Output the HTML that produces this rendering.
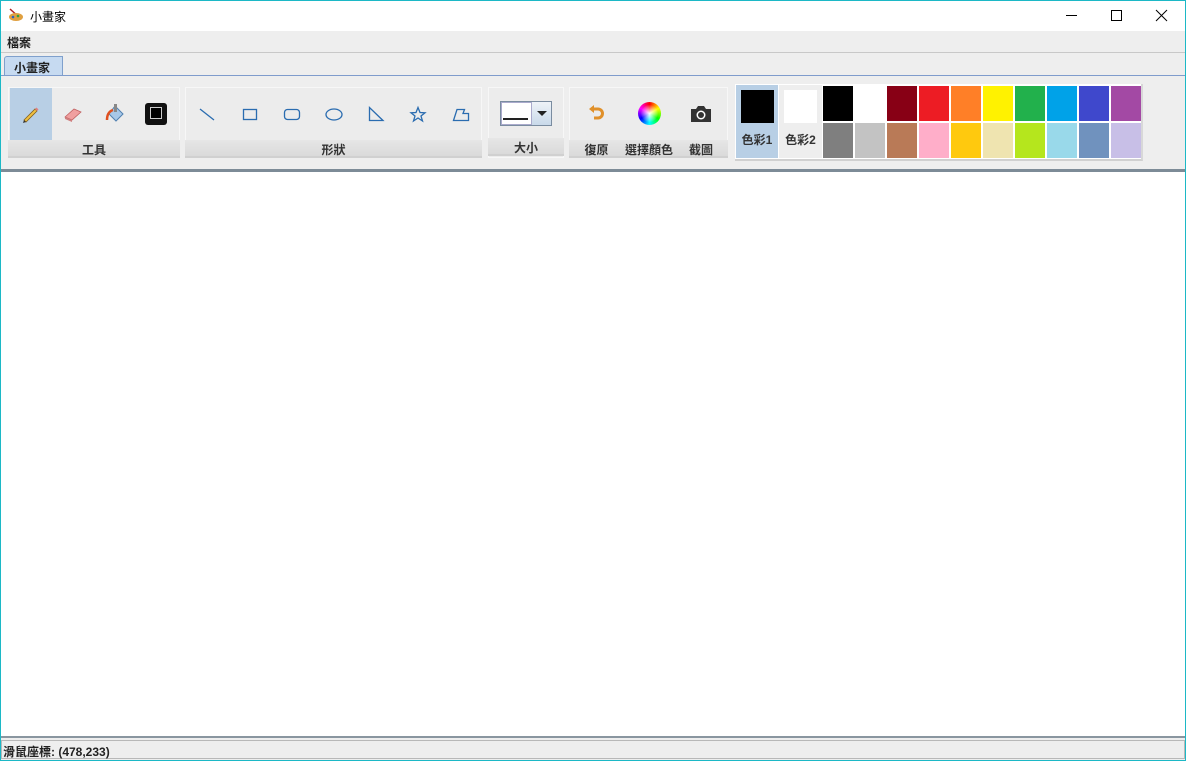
<!DOCTYPE html>
<html><head><meta charset="utf-8"><style>
*{margin:0;padding:0;box-sizing:border-box}
body{width:1186px;height:761px;position:relative;overflow:hidden;background:#eeeeee;font-family:"Liberation Sans","Noto Sans CJK TC",sans-serif;color:#222}
.a{position:absolute}
.lbl{position:absolute;font-size:12px;font-weight:bold;text-align:center;color:#333}
.grp{position:absolute;background:#ececec;border:1px solid #f7f7f7}
.band{position:absolute;background:linear-gradient(#e6e6e6,#dadada);border-bottom:2px solid #d0d0d0}
.sw{position:absolute;width:30px;height:35px}
</style></head><body>
<div class="a" style="left:0;top:0;width:1186px;height:761px;border:1px solid #1cb8c6;pointer-events:none;z-index:9"></div>
<div class="a" style="left:0;top:0;width:1186px;height:31px;background:#fff"></div>
<svg class="a" style="left:8px;top:8px" width="16" height="14"><path d="M2 1 L12 10" stroke="#b02020" stroke-width="1.5"/><ellipse cx="8" cy="9" rx="7" ry="4" fill="#e0a040"/><circle cx="5" cy="9" r="1.3" fill="#3060c0"/><circle cx="10" cy="8" r="1.3" fill="#30a040"/></svg>
<div class="a" style="left:30px;top:8px;font-size:12px;color:#000">小畫家</div>
<svg class="a" style="left:1060px;top:8px" width="110" height="16"><path d="M6 7.5H17" stroke="#000"/><rect x="51.5" y="2.5" width="10" height="10" fill="none" stroke="#000"/><path d="M96 2L107 13M107 2L96 13" stroke="#000"/></svg>
<div class="a" style="left:0;top:31px;width:1186px;height:22px;background:#eeeeee;border-bottom:1px solid #c8c8c8"></div>
<div class="a" style="left:7px;top:34px;font-size:12px;font-weight:bold">檔案</div>
<div class="a" style="left:4px;top:56px;width:59px;height:20px;background:#c6daf1;border:1px solid #7fa0cc;border-bottom:none;border-radius:3px 0 0 0"></div>
<div class="a" style="left:14px;top:59px;font-size:12px;font-weight:bold">小畫家</div>
<div class="a" style="left:1px;top:75px;width:1184px;height:1px;background:#7f9ccc"></div>
<div class="a" style="left:1px;top:169px;width:1184px;height:3px;background:#7d8b97"></div>
<div class="a" style="left:1px;top:172px;width:1184px;height:566px;background:#fff;border-bottom:2px solid #8a96a0"></div>
<div class="a" style="left:1px;top:740px;width:1184px;height:19px;background:#eeeeee;border:1px solid #b8b8b8"></div>
<div class="a" style="left:3px;top:743px;font-size:12px;font-weight:bold;color:#222">滑鼠座標: (478,233)</div>

<!-- 工具 -->
<div class="grp" style="left:8px;top:87px;width:172px;height:71px"></div>
<div class="a" style="left:10px;top:88px;width:42px;height:52px;background:#b8cfe5"></div>
<div class="band" style="left:8px;top:140px;width:172px;height:18px"></div>
<div class="lbl" style="left:8px;top:141px;width:172px">工具</div>
<svg class="a" style="left:20px;top:104px" width="22" height="20"><path d="M4 16 L15 5 L17 7 L6 18 Z" fill="#f0c040" stroke="#806020" stroke-width=".8"/><path d="M15 5L16.5 3.5L18.5 5.5L17 7Z" fill="#e08080"/><path d="M4 16L3 19L6 18Z" fill="#333"/></svg>
<svg class="a" style="left:62px;top:104px" width="22" height="20"><path d="M3 13 L12 5 L19 8 L10 16 Z" fill="#f0a0a0" stroke="#c06060" stroke-width=".8"/><path d="M3 13L10 16L10 18L3 15Z" fill="#d08080"/></svg>
<svg class="a" style="left:104px;top:102px" width="22" height="22"><path d="M11 4 L19 12 L12 19 L5 12 Z" fill="#a8c8e8" stroke="#5080b0"/><path d="M3 18 Q3 10 9 8" stroke="#e05020" stroke-width="2.5" fill="none"/><rect x="10" y="2" width="3" height="8" fill="#888"/></svg>
<div class="a" style="left:145px;top:103px;width:22px;height:22px;background:#111;border-radius:3px"></div>
<div class="a" style="left:150px;top:107px;width:12px;height:12px;border:1.5px solid #ccc;background:#000"></div>

<!-- 形狀 -->
<div class="grp" style="left:185px;top:87px;width:297px;height:71px"></div>
<div class="band" style="left:185px;top:140px;width:297px;height:18px"></div>
<div class="lbl" style="left:185px;top:141px;width:297px">形狀</div>
<svg class="a" style="left:185px;top:100px" width="297" height="30" fill="none" stroke="#2a6cb0" stroke-width="1.3">
<path d="M15 9L29 20"/><rect x="58.5" y="9.5" width="13" height="10"/><rect x="99.5" y="9.5" width="15" height="10" rx="3"/><ellipse cx="149" cy="14.5" rx="8" ry="5.5"/><path d="M184.5 7.5V20.5H198Z"/><path d="M233 7.5L235 12.5L240 12.8L236 16L237.5 21L233 18L228.5 21L230 16L226 12.8L231 12.5Z"/><path d="M268.5 20.5L272 9.5H279.5L278 13.5H283.5V20.5Z"/></svg>

<!-- 大小 -->
<div class="grp" style="left:488px;top:87px;width:76px;height:71px"></div>
<div class="band" style="left:488px;top:138px;width:76px;height:18px"></div>
<div class="lbl" style="left:488px;top:139px;width:76px">大小</div>
<div class="a" style="left:500px;top:101px;width:52px;height:25px;border:1px solid #7a8ca0;background:#fff"></div>
<div class="a" style="left:501px;top:102px;width:31px;height:23px;border:1px solid #aac;background:#fff"></div>
<div class="a" style="left:503px;top:118px;width:25px;height:2px;background:#222"></div>
<div class="a" style="left:532px;top:102px;width:19px;height:23px;background:linear-gradient(#eef3f8,#c9d9ea)"></div>
<div class="a" style="left:537px;top:111px;border-left:5px solid transparent;border-right:5px solid transparent;border-top:5px solid #222"></div>

<!-- 復原 -->
<div class="grp" style="left:569px;top:87px;width:159px;height:71px"></div>
<div class="band" style="left:569px;top:140px;width:159px;height:18px"></div>
<div class="lbl" style="left:569px;top:141px;width:55px">復原</div>
<div class="lbl" style="left:620px;top:141px;width:58px">選擇顏色</div>
<div class="lbl" style="left:680px;top:141px;width:42px">截圖</div>
<svg class="a" style="left:587px;top:104px" width="20" height="18"><path d="M5 5 H11 A4.5 4.5 0 0 1 11 14 H7" stroke="#e0902a" stroke-width="3" fill="none"/><path d="M2 5L7 1V9Z" fill="#e0902a"/></svg>
<div class="a" style="left:638px;top:102px;width:23px;height:23px;border-radius:50%;background:conic-gradient(red,#ff0,#0f0,#0ff,#00f,#f0f,red)"></div>
<div class="a" style="left:641px;top:105px;width:17px;height:17px;border-radius:50%;background:radial-gradient(#fff,rgba(255,255,255,0) 75%)"></div>
<svg class="a" style="left:689px;top:104px" width="24" height="20"><path d="M2 5H7L9 2H15L17 5H22V18H2Z" fill="#333" rx="2"/><circle cx="12" cy="11" r="4.5" fill="#fff"/><circle cx="12" cy="11" r="3" fill="#333"/></svg>

<!-- colors -->
<div class="a" style="left:735px;top:84px;width:408px;height:77px;background:#fff;border-right:2px solid #d8d8d8;border-bottom:2px solid #d0d0d0"></div>
<div class="a" style="left:736px;top:85px;width:42px;height:73px;background:#b8cfe5"></div>
<div class="a" style="left:741px;top:90px;width:33px;height:33px;background:#000"></div>
<div class="a" style="left:784px;top:90px;width:33px;height:33px;background:#fff"></div>
<div class="a" style="left:779px;top:85px;width:43px;height:73px;background:#eeeeee;z-index:0"></div>
<div class="a" style="left:784px;top:90px;width:33px;height:33px;background:#fff"></div>
<div class="lbl" style="left:736px;top:131px;width:42px">色彩1</div>
<div class="lbl" style="left:779px;top:131px;width:43px">色彩2</div>
<div class="sw" style="left:823px;top:86px;background:#000"></div>
<div class="sw" style="left:855px;top:86px;background:#fff"></div>
<div class="sw" style="left:887px;top:86px;background:#880015"></div>
<div class="sw" style="left:919px;top:86px;background:#ed1c24"></div>
<div class="sw" style="left:951px;top:86px;background:#ff7f27"></div>
<div class="sw" style="left:983px;top:86px;background:#fff200"></div>
<div class="sw" style="left:1015px;top:86px;background:#22b14c"></div>
<div class="sw" style="left:1047px;top:86px;background:#00a2e8"></div>
<div class="sw" style="left:1079px;top:86px;background:#3f48cc"></div>
<div class="sw" style="left:1111px;top:86px;background:#a349a4"></div>
<div class="sw" style="left:823px;top:123px;background:#7f7f7f"></div>
<div class="sw" style="left:855px;top:123px;background:#c3c3c3"></div>
<div class="sw" style="left:887px;top:123px;background:#b97a57"></div>
<div class="sw" style="left:919px;top:123px;background:#ffaec9"></div>
<div class="sw" style="left:951px;top:123px;background:#ffc90e"></div>
<div class="sw" style="left:983px;top:123px;background:#efe4b0"></div>
<div class="sw" style="left:1015px;top:123px;background:#b5e61d"></div>
<div class="sw" style="left:1047px;top:123px;background:#99d9ea"></div>
<div class="sw" style="left:1079px;top:123px;background:#7092be"></div>
<div class="sw" style="left:1111px;top:123px;background:#c8bfe7"></div>
</body></html>
